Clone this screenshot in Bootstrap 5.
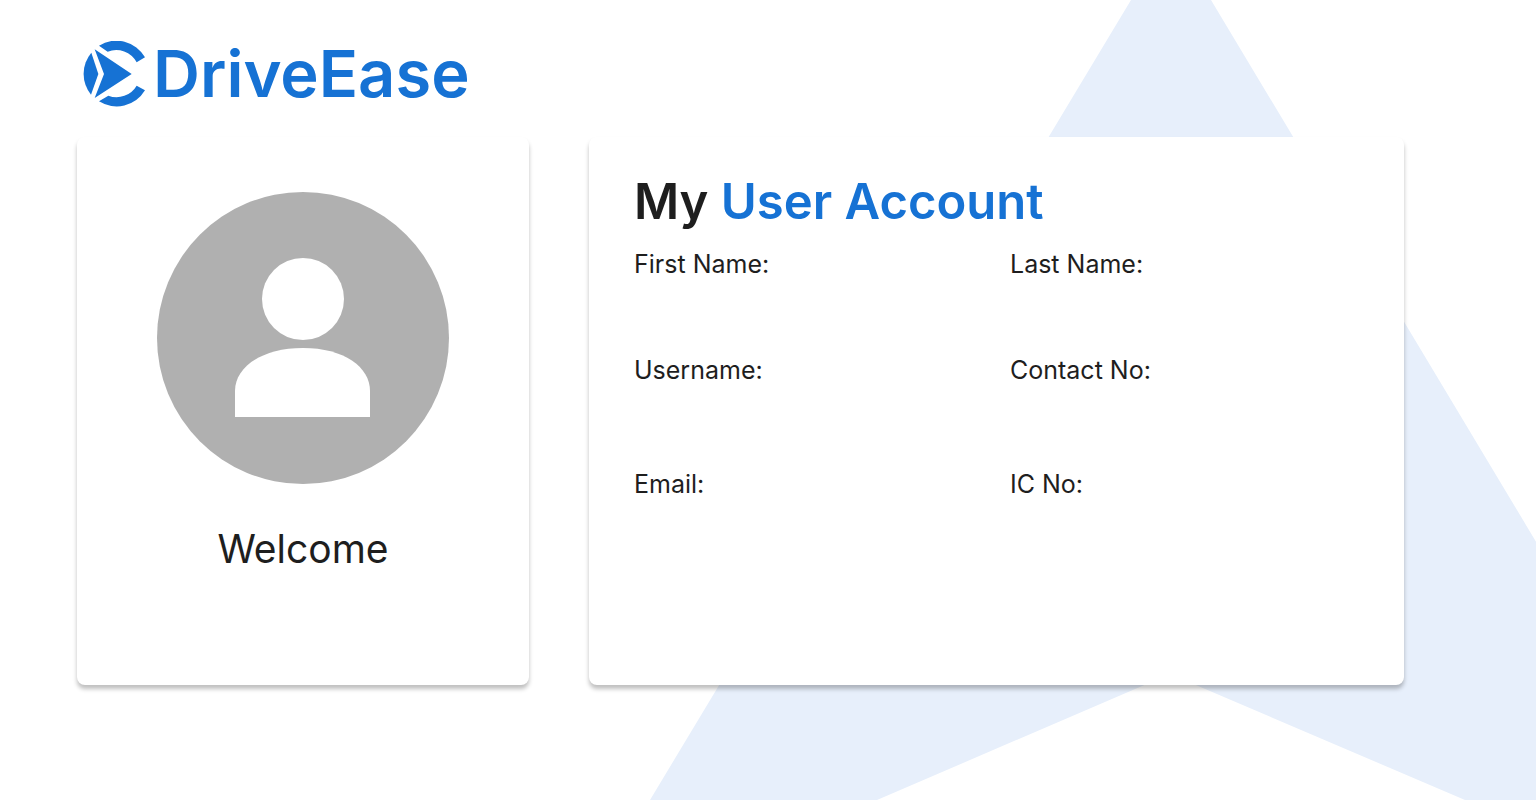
<!DOCTYPE html>
<html lang="en">
<head>
<meta charset="utf-8">
<meta name="viewport" content="width=device-width, initial-scale=1">
<title>DriveEase - My User Account</title>
<link href="https://cdn.jsdelivr.net/npm/bootstrap@5.3.0/dist/css/bootstrap.min.css" rel="stylesheet">
<style>
  body { font-family: Inter, "Liberation Sans", sans-serif; color: #1e1e1e; background: #fff; }
  .backdrop-star { z-index: -1; }
  .page-head { padding: 40px 77px 29px 82px; }
  .brand { color: #1672d4; font-size: 65px; font-weight: 600; line-height: 68px; gap: 7px; }
  .brand:hover { color: #1672d4; }
  .account-grid { display: grid; grid-template-columns: 452fr 815fr; gap: 60px; padding: 0 132px 48px 77px; }
  .panel { background: #fff; border-radius: 8px; box-shadow: 0 4px 4px rgba(0, 0, 0, .25); min-height: 548px; }
  .profile { padding: 55px 32px 96px; }
  .avatar { width: 292px; max-width: 100%; }
  .welcome { font-size: 39px; line-height: 44px; margin: 43px 0 0; }
  .details { padding: 36px 0 48px 45px; }
  .details h1 { font-size: 49px; font-weight: 600; line-height: 58px; margin: 0 0 15px; }
  .accent { color: #1672d4; }
  .fields { display: grid; grid-template-columns: 376fr 394fr; grid-template-rows: 106px 114px auto; }
  .fields dt { font-size: 25px; font-weight: 400; line-height: 36px; }
  @media (max-width: 991px) {
    .page-head { padding-left: 24px; }
    .account-grid { grid-template-columns: 1fr; padding: 0 24px 24px; gap: 24px; }
  }
</style>
</head>
<body class="position-relative min-vh-100 overflow-x-hidden">
<svg class="backdrop-star position-absolute top-0 start-0 w-100 h-100" viewBox="0 0 1536 800" preserveAspectRatio="xMaxYMin slice" aria-hidden="true">
  <path fill="#e7effb" d="M1131 0h80l480 800h-226L1170 674 877 800H650z"/>
</svg>
<header class="page-head">
  <a href="#" class="brand d-inline-flex align-items-center align-top text-decoration-none">
    <svg width="64" height="66" viewBox="36 33 192 198" fill="currentColor" aria-hidden="true">
      <path d="M87 47A99 99 0 0 1 225 82L200 97A70 70 0 0 0 113 65Z"/>
      <path d="M87 214A99 99 0 0 0 225 181L200 167A70 70 0 0 1 115 197Z"/>
      <path d="M64 68A99 99 0 0 0 63 194L85 132Z"/>
      <path d="M74 58L185 132 74 204 102 132Z"/>
    </svg>
    <span>DriveEase</span>
  </a>
</header>
<main class="account-grid">
  <section class="panel profile text-center">
    <svg class="avatar" viewBox="0 0 292 292" role="img" aria-label="Profile picture">
      <circle cx="146" cy="146" r="146" fill="#b0b0b0"/>
      <circle cx="146" cy="107" r="41" fill="#fff"/>
      <path fill="#fff" d="M78 225V199C78 175 105 156 146 156S213 175 213 199V225Z"/>
    </svg>
    <p class="welcome">Welcome</p>
  </section>
  <section class="panel details">
    <h1>My <span class="accent">User Account</span></h1>
    <dl class="fields mb-0">
      <dt>First Name:</dt>
      <dt>Last Name:</dt>
      <dt>Username:</dt>
      <dt>Contact No:</dt>
      <dt>Email:</dt>
      <dt>IC No:</dt>
    </dl>
  </section>
</main>
<script src="https://cdn.jsdelivr.net/npm/bootstrap@5.3.0/dist/js/bootstrap.bundle.min.js"></script>
</body>
</html>
